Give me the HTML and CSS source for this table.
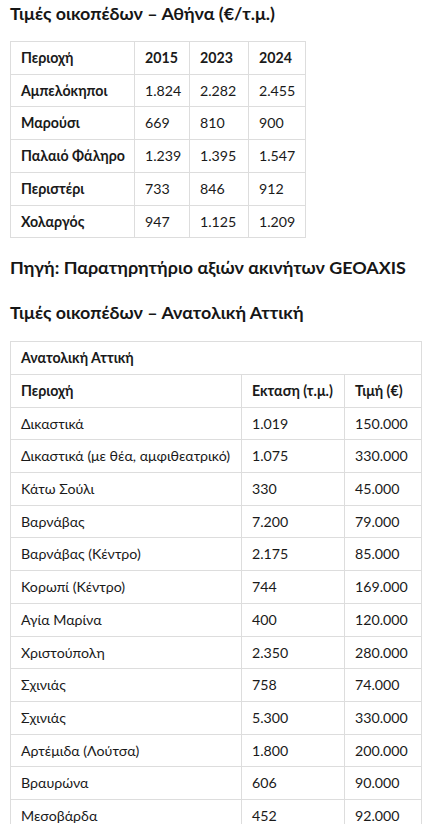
FILE: index.html
```html
<!DOCTYPE html>
<html lang="el">
<head>
<meta charset="utf-8">
<link rel="stylesheet" href="styles.css">
</head>
<body>
<main class="article">
  <h3 class="heading heading--first">Τιμές οικοπέδων – Αθήνα (€/τ.μ.)</h3>
  <table class="data data--athens">
    <colgroup><col class="c-a1"><col class="c-a2"><col class="c-a3"><col class="c-a4"></colgroup>
    <tr class="head"><td>Περιοχή</td><td>2015</td><td>2023</td><td>2024</td></tr>
    <tr><td class="strong">Αμπελόκηποι</td><td>1.824</td><td>2.282</td><td>2.455</td></tr>
    <tr><td class="strong">Μαρούσι</td><td>669</td><td>810</td><td>900</td></tr>
    <tr><td class="strong">Παλαιό Φάληρο</td><td>1.239</td><td>1.395</td><td>1.547</td></tr>
    <tr><td class="strong">Περιστέρι</td><td>733</td><td>846</td><td>912</td></tr>
    <tr><td class="strong">Χολαργός</td><td>947</td><td>1.125</td><td>1.209</td></tr>
  </table>
  <h3 class="heading heading--source">Πηγή: Παρατηρητήριο αξιών ακινήτων GEOAXIS</h3>
  <h3 class="heading heading--second">Τιμές οικοπέδων – Ανατολική Αττική</h3>
  <table class="data data--east">
    <colgroup><col class="c-e1"><col class="c-e2"><col class="c-e3"></colgroup>
    <tr class="head"><td colspan="3">Ανατολική Αττική</td></tr>
    <tr class="head"><td>Περιοχή</td><td>Εκταση (τ.μ.)</td><td>Τιμή (€)</td></tr>
    <tr><td>Δικαστικά</td><td>1.019</td><td>150.000</td></tr>
    <tr><td>Δικαστικά (με θέα, αμφιθεατρικό)</td><td>1.075</td><td>330.000</td></tr>
    <tr><td>Κάτω Σούλι</td><td>330</td><td>45.000</td></tr>
    <tr><td>Βαρνάβας</td><td>7.200</td><td>79.000</td></tr>
    <tr><td>Βαρνάβας (Κέντρο)</td><td>2.175</td><td>85.000</td></tr>
    <tr><td>Κορωπί (Κέντρο)</td><td>744</td><td>169.000</td></tr>
    <tr><td>Αγία Μαρίνα</td><td>400</td><td>120.000</td></tr>
    <tr><td>Χριστούπολη</td><td>2.350</td><td>280.000</td></tr>
    <tr><td>Σχινιάς</td><td>758</td><td>74.000</td></tr>
    <tr><td>Σχινιάς</td><td>5.300</td><td>330.000</td></tr>
    <tr><td>Αρτέμιδα (Λούτσα)</td><td>1.800</td><td>200.000</td></tr>
    <tr><td>Βραυρώνα</td><td>606</td><td>90.000</td></tr>
    <tr><td>Μεσοβάρδα</td><td>452</td><td>92.000</td></tr>
  </table>
</main>
</body>
</html>
```
FILE: styles.css
```css
html, body {
  margin: 0;
  padding: 0;
  background: #ffffff;
}
body {
  font-family: Lato, "Noto Sans", sans-serif;
  color: #1a1a1a;
}
.article {
  padding: 1px 10px 0 10px;
}
.heading {
  margin: 0;
  font-size: 17.9px;
  font-weight: 700;
  line-height: 24px;
  color: #161616;
}
.heading--first { margin-top: 0; }
.heading--source { margin-top: 17px; }
.heading--second { margin-top: 21px; }
.data {
  border-collapse: collapse;
  table-layout: fixed;
  font-size: 14.2px;
  margin-top: 16px;
}
.data--east { margin-top: 17px; }
.data--athens { width: 295px; }
.data--east { width: 411px; }
.c-a1 { width: 124px; }
.c-a2 { width: 55px; }
.c-a3 { width: 59px; }
.c-a4 { width: 57px; }
.c-e1 { width: 231px; }
.c-e2 { width: 103px; }
.c-e3 { width: 77px; }
.data td {
  border: 1px solid #dddddd;
  padding: 6px 10px;
  line-height: 19.7px;
  white-space: nowrap;
  vertical-align: middle;
}
.head td, .strong {
  font-weight: 700;
}
```
